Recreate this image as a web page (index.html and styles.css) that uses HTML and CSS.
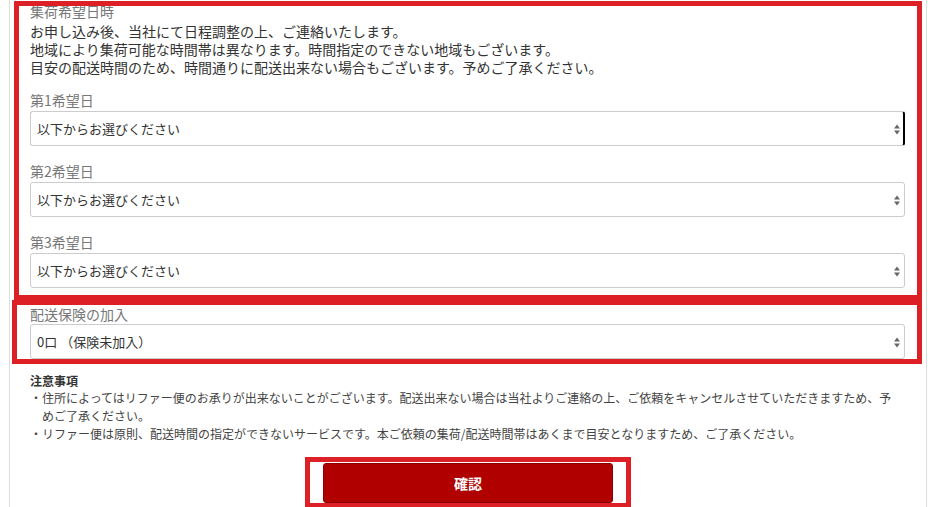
FILE: index.html
```html
<!DOCTYPE html>
<html lang="ja">
<head>
  <meta charset="UTF-8">
  <meta name="viewport" content="width=device-width, initial-scale=1.0">
  <title>集荷希望日時</title>
  <link rel="stylesheet" href="styles.css">
</head>
<body>

  <div class="page">

    <div class="mark mark-schedule">
      <div class="label label-top">集荷希望日時</div>
      <p class="lead">
        お申し込み後、当社にて日程調整の上、ご連絡いたします。<br>
        地域により集荷可能な時間帯は異なります。時間指定のできない地域もございます。<br>
        目安の配送時間のため、時間通りに配送出来ない場合もございます。予めご了承ください。
      </p>

      <div class="field field-first">
        <div class="label">第1希望日</div>
        <div class="select-wrap">
          <select class="select select-focus">
            <option>以下からお選びください</option>
          </select>
          <svg class="select-arrow" width="6" height="11" viewBox="0 0 6 11"><path d="M0 4.5L3 0.5L6 4.5Z M0 6.5L3 10.5L6 6.5Z" fill="#666"/></svg>
        </div>
      </div>

      <div class="field">
        <div class="label">第2希望日</div>
        <div class="select-wrap">
          <select class="select">
            <option>以下からお選びください</option>
          </select>
          <svg class="select-arrow" width="6" height="11" viewBox="0 0 6 11"><path d="M0 4.5L3 0.5L6 4.5Z M0 6.5L3 10.5L6 6.5Z" fill="#666"/></svg>
        </div>
      </div>

      <div class="field">
        <div class="label">第3希望日</div>
        <div class="select-wrap">
          <select class="select">
            <option>以下からお選びください</option>
          </select>
          <svg class="select-arrow" width="6" height="11" viewBox="0 0 6 11"><path d="M0 4.5L3 0.5L6 4.5Z M0 6.5L3 10.5L6 6.5Z" fill="#666"/></svg>
        </div>
      </div>
    </div>

    <div class="mark mark-insurance">
      <div class="label label-insurance">配送保険の加入</div>
      <div class="select-wrap">
        <select class="select">
          <option>0口 （保険未加入）</option>
        </select>
        <svg class="select-arrow" width="6" height="11" viewBox="0 0 6 11"><path d="M0 4.5L3 0.5L6 4.5Z M0 6.5L3 10.5L6 6.5Z" fill="#666"/></svg>
      </div>
    </div>

    <div class="notes">
      <div class="notes-title">注意事項</div>
      <ul class="notes-list">
        <li>・住所によってはリファー便のお承りが出来ないことがございます。配送出来ない場合は当社よりご連絡の上、ご依頼をキャンセルさせていただきますため、予めご了承ください。</li>
        <li>・リファー便は原則、配送時間の指定ができないサービスです。本ご依頼の集荷/配送時間帯はあくまで目安となりますため、ご了承ください。</li>
      </ul>
    </div>

    <div class="mark mark-button">
      <button class="confirm" type="button">確認</button>
    </div>

  </div>

</body>
</html>
```

FILE: styles.css
```css
body {
  margin: 0;
  background: #fff;
  color: #333;
  font-family: "Noto Sans CJK JP", "Noto Sans", sans-serif;
  font-size: 14px;
}
.page {
  margin-left: 9px;
  width: 916px;
  min-height: 507px;
  border-left: 1px solid #ddd;
  border-right: 1px solid #ddd;
  overflow: hidden;
}
.mark {
  border: 5px solid #dd1f26;
}
.mark-schedule {
  margin: 1px 4px 0 4px;
  padding: 0 12px 7px 11px;
  overflow: hidden;
}
.mark-insurance {
  margin: 0 4px 0 2px;
  padding: 0 12px 0 13px;
}
.label {
  color: #777;
  font-size: 14px;
  line-height: 20px;
  margin-bottom: 1px;
}
.label-top {
  line-height: 18px;
  margin: -4px 0 0;
}
.label-insurance {
  margin-top: -1px;
  margin-bottom: 0;
}
.lead {
  margin: 2px 0 0;
  line-height: 18px;
  color: #333;
}
.field {
  margin-top: 15px;
}
.field-first {
  margin-top: 14px;
}
.select-wrap {
  position: relative;
}
.select {
  display: block;
  width: 100%;
  height: 35px;
  box-sizing: border-box;
  padding: 0 6px;
  border: 1px solid #ccc;
  border-radius: 3px;
  background: #fff;
  color: #333;
  font-family: "Noto Sans CJK JP", "Noto Sans", sans-serif;
  font-size: 13px;
  -webkit-appearance: none;
  appearance: none;
  outline: none;
}
.select-focus {
  border-right: 2px solid #000;
}
.select-arrow {
  position: absolute;
  right: 5px;
  top: 50%;
  margin-top: -5px;
  pointer-events: none;
}
.notes {
  margin-top: 9px;
  padding: 0 25px 0 20px;
  font-size: 12px;
}
.notes-title {
  font-weight: bold;
  line-height: 16px;
  color: #333;
}
.notes-list {
  list-style: none;
  margin: 0;
  padding: 0 0 0 12px;
  line-height: 18px;
  color: #444;
}
.notes-list li {
  text-indent: -12px;
}
.mark-button {
  width: 316px;
  margin: 14px auto 0;
  padding: 1px 0 0;
  display: flex;
  justify-content: center;
}
.confirm {
  width: 290px;
  height: 40px;
  background: #b00000;
  border: 1px solid #8e0000;
  border-radius: 3px;
  color: #fff;
  font-family: "Noto Sans CJK JP", "Noto Sans", sans-serif;
  font-size: 14px;
  font-weight: bold;
  cursor: pointer;
}
```
